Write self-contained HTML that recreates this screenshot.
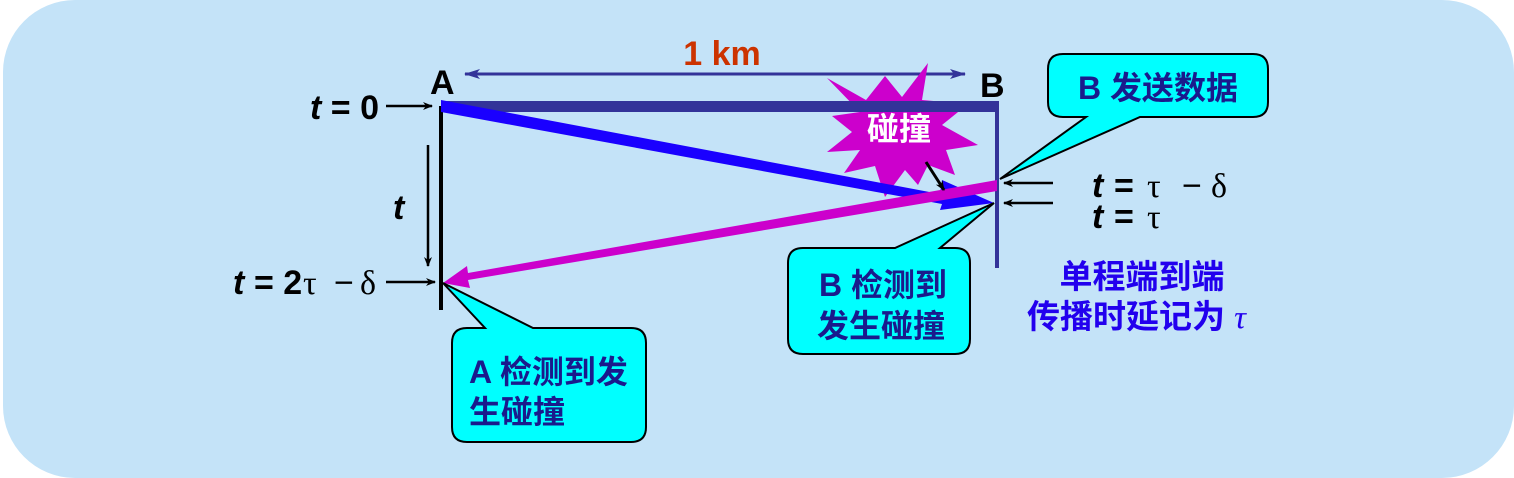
<!DOCTYPE html>
<html><head><meta charset="utf-8"><style>
html,body{margin:0;padding:0;background:#fff;width:1514px;height:478px;overflow:hidden}
svg{display:block}
.b{font-family:"Liberation Sans","Noto Sans CJK SC",sans-serif;font-weight:bold}
.s{font-family:"Liberation Serif","DejaVu Serif",serif}
.m{font-family:"Liberation Sans",sans-serif}
</style></head><body>
<svg width="1514" height="478" viewBox="0 0 1514 478" xmlns="http://www.w3.org/2000/svg">
<defs>
<marker id="ah" markerWidth="10" markerHeight="8" refX="9" refY="4" orient="auto" markerUnits="userSpaceOnUse"><path d="M0,0 L10,4 L0,8 L3,4z" fill="#000"/></marker>
<marker id="ahb" markerWidth="16" markerHeight="10" refX="15" refY="5" orient="auto-start-reverse" markerUnits="userSpaceOnUse"><path d="M0,0 L16,5 L0,10 L4,5z" fill="#333399"/></marker>
</defs>
<rect x="3" y="0" width="1511" height="478" rx="72" fill="#c4e3f8"/>

<text x="722" y="65" class="b" font-size="34" fill="#cc3300" text-anchor="middle">1 km</text>
<line x1="465" y1="74" x2="965" y2="74" stroke="#333399" stroke-width="3" marker-start="url(#ahb)" marker-end="url(#ahb)"/>
<text x="430" y="94" class="b" font-size="34" fill="#000">A</text>
<text x="980" y="97" class="b" font-size="34" fill="#000">B</text>

<polygon points="827,78 866,100 885,76 902,97 928,63 922,100 968,104 942,125 978,145 946,150 955,175 928,165 918,185 905,170 885,197 875,166 844,173 860,150 827,152 852,132 832,116 860,112" fill="#cc00cc"/>
<text x="899" y="140" class="b" font-size="32" fill="#fff" text-anchor="middle">碰撞</text>

<rect x="441" y="101" width="558" height="11" fill="#333399"/>
<rect x="995" y="103" width="4" height="165" fill="#333399"/>
<rect x="439" y="106" width="4" height="204" fill="#000"/>

<polygon points="441,100 441,112 942,204 940,210 994,203 942,180 940,194" fill="#1a00ff"/>
<polygon points="997,180 997,191 468,280 470,288 443,283 467,266 468,273" fill="#cc00cc"/>

<line x1="926" y1="162" x2="944" y2="190" stroke="#000" stroke-width="3" marker-end="url(#ah)"/>

<text x="310" y="119" font-size="34" fill="#000" class="b"><tspan font-style="italic">t</tspan> = 0</text>
<line x1="386" y1="106" x2="432" y2="106" stroke="#000" stroke-width="2.5" marker-end="url(#ah)"/>
<text x="393" y="219" class="b" font-style="italic" font-size="34" fill="#000">t</text>
<line x1="428" y1="145" x2="428" y2="266" stroke="#000" stroke-width="2.5" marker-end="url(#ah)"/>
<text y="294" font-size="34" fill="#000"><tspan x="233" class="b" font-style="italic">t</tspan><tspan x="254" class="b">= 2</tspan><tspan x="303" class="s">τ</tspan><tspan x="334" class="m">−</tspan><tspan x="360" class="s">δ</tspan></text>
<line x1="386" y1="282" x2="435" y2="282" stroke="#000" stroke-width="2.5" marker-end="url(#ah)"/>

<line x1="1053" y1="183" x2="1004" y2="183" stroke="#000" stroke-width="2.5" marker-end="url(#ah)"/>
<line x1="1053" y1="203" x2="1004" y2="203" stroke="#000" stroke-width="2.5" marker-end="url(#ah)"/>
<text y="197" font-size="34" fill="#000"><tspan x="1092" class="b" font-style="italic">t</tspan><tspan x="1114" class="b">=</tspan><tspan x="1147" class="s">τ</tspan><tspan x="1182" class="m">−</tspan><tspan x="1211" class="s">δ</tspan></text>
<text y="228" font-size="34" fill="#000"><tspan x="1092" class="b" font-style="italic">t</tspan><tspan x="1114" class="b">=</tspan><tspan x="1147" class="s">τ</tspan></text>

<text x="1142" y="288" class="b" font-size="33" fill="#2200ee" text-anchor="middle">单程端到端</text>
<text x="1027" y="328" class="b" font-size="33" fill="#2200ee">传播时延记为 <tspan class="s" font-style="italic" font-weight="normal">τ</tspan></text>

<path d="M1063,54 H1253 Q1268,54 1268,69 V102 Q1268,117 1253,117 H1140 L1000,179 L1086,117 H1063 Q1048,117 1048,102 V69 Q1048,54 1063,54 Z" fill="#00ffff" stroke="#000" stroke-width="2"/>
<text x="1158" y="99" class="b" font-size="32" fill="#1a1a8c" text-anchor="middle">B 发送数据</text>

<path d="M803,248 H895 L994,203 L940,248 H955 Q970,248 970,263 V339 Q970,354 955,354 H803 Q788,354 788,339 V263 Q788,248 803,248 Z" fill="#00ffff" stroke="#000" stroke-width="2"/>
<text x="819" y="296" class="b" font-size="32" fill="#1a1a8c">B 检测到</text>
<text x="817" y="337" class="b" font-size="32" fill="#1a1a8c">发生碰撞</text>

<path d="M467,328 H485 L443,283 L533,328 H631 Q646,328 646,343 V427 Q646,442 631,442 H467 Q452,442 452,427 V343 Q452,328 467,328 Z" fill="#00ffff" stroke="#000" stroke-width="2"/>
<text x="469" y="383" class="b" font-size="32" fill="#1a1a8c">A 检测到发</text>
<text x="469" y="423" class="b" font-size="32" fill="#1a1a8c">生碰撞</text>
</svg>
</body></html>
